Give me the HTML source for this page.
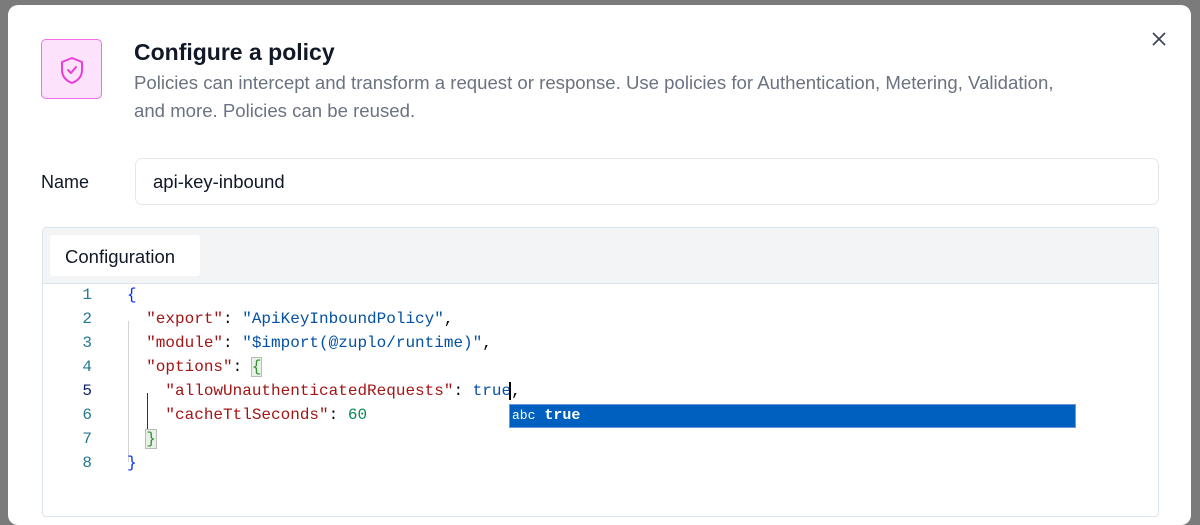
<!DOCTYPE html>
<html><head><style>
*{box-sizing:border-box;margin:0;padding:0}
body{width:1200px;height:502px;background:#7b7b7b;font-family:"Liberation Sans",sans-serif;position:relative;overflow:hidden}
.modal{position:absolute;left:8px;top:5px;width:1183px;height:520px;background:#fff;border-radius:10px}
.icon{position:absolute;left:33px;top:34px;width:61px;height:60px;background:#fde2fb;border:1.5px solid #f36fe9;border-radius:5px}
h1{position:absolute;left:126px;top:34px;font-size:23px;font-weight:bold;color:#111827}
.desc{position:absolute;left:126px;top:64px;width:950px;font-size:18.6px;line-height:28px;color:#6b7280}
.x{position:absolute;left:1143px;top:26px}
.lbl{position:absolute;left:33px;top:167px;font-size:18px;color:#111827}
.inp{position:absolute;left:127px;top:153px;width:1024px;height:47px;border:1px solid #e5e7eb;border-radius:7px;font-size:18.5px;padding:12px 0 0 17px;color:#111827}
.cfg{position:absolute;left:34px;top:222px;width:1117px;height:290px;border:1px solid #dbe3ee;border-radius:4px;background:#fff;overflow:hidden}
.hd{height:56px;background:#f3f4f6;border-bottom:1px solid #dbe3ee;position:relative}
.tab{position:absolute;left:7px;top:7px;width:150px;height:41px;background:#fff;border-radius:3px;font-size:18.5px;color:#111827;padding:11px 0 0 15px}
.code{position:absolute;top:53px;left:0;right:0;font-family:"Liberation Mono",monospace;font-size:16px}
.ln{position:absolute;width:49px;text-align:right;color:#237893}
.l{position:absolute;left:84px;white-space:pre;color:#000}
.k{color:#a31515}.s{color:#0451a5}.n{color:#098658}.b{color:#0431fa}.g{color:#319331}
.sug{position:absolute;left:466px;top:123px;width:567px;height:24px;background:#0060c0;border:1px solid #6b9bd8;color:#fff;font-family:"Liberation Mono",monospace;font-size:15px;font-weight:bold;padding:2px 0 0 2px}
</style></head><body>
<div class="modal">
<div class="icon"><svg width="61" height="60" viewBox="0 0 61 60"><path d="M30 18 L40 22 V30 C40 37 35 41 30 43 C25 41 20 37 20 30 V22 Z" fill="none" stroke="#e83fd8" stroke-width="2" stroke-linejoin="round"/><path d="M26 30 L29 33 L34 27" fill="none" stroke="#e83fd8" stroke-width="2" stroke-linecap="round" stroke-linejoin="round"/></svg></div>
<h1>Configure a policy</h1>
<div class="desc">Policies can intercept and transform a request or response. Use policies for Authentication, Metering, Validation, and more. Policies can be reused.</div>
<svg class="x" width="16" height="16" viewBox="0 0 16 16"><path d="M2 2L14 14M14 2L2 14" stroke="#374151" stroke-width="1.6"/></svg>
<div class="lbl">Name</div>
<div class="inp">api-key-inbound</div>
<div class="cfg">
<div class="hd"><div class="tab">Configuration</div></div>
<div class="code">
<div style="position:absolute;left:85px;top:40px;width:1px;height:141px;background:#d4d4d4"></div>
<div style="position:absolute;left:104px;top:112px;width:1px;height:47px;background:#333"></div>
<div class="ln" style="top:5px">1</div><div class="l" style="top:5px"><span class="b">{</span></div>
<div class="ln" style="top:29px">2</div><div class="l" style="top:29px">  <span class="k">"export"</span>: <span class="s">"ApiKeyInboundPolicy"</span>,</div>
<div class="ln" style="top:53px">3</div><div class="l" style="top:53px">  <span class="k">"module"</span>: <span class="s">"$import(@zuplo/runtime)"</span>,</div>
<div class="ln" style="top:77px">4</div><div class="l" style="top:77px">  <span class="k">"options"</span>: <span class="g" style="background:#e8f0e8;outline:1px solid #bbb">{</span></div>
<div class="ln" style="top:101px;color:#0b216f">5</div><div class="l" style="top:101px">    <span class="k">"allowUnauthenticatedRequests"</span>: <span class="s">true</span><span style="border-left:2px solid #000;margin-left:-2px"></span>,</div>
<div class="ln" style="top:125px">6</div><div class="l" style="top:125px">    <span class="k">"cacheTtlSeconds"</span>: <span class="n">60</span></div>
<div class="ln" style="top:149px">7</div><div class="l" style="top:149px">  <span class="g" style="background:#e8f0e8;outline:1px solid #bbb">}</span></div>
<div class="ln" style="top:173px">8</div><div class="l" style="top:173px"><span class="b">}</span></div>
<div class="sug"><span style="font-weight:normal;font-size:13px">abc</span> true</div>
</div>
</div>
</div>
</body></html>
